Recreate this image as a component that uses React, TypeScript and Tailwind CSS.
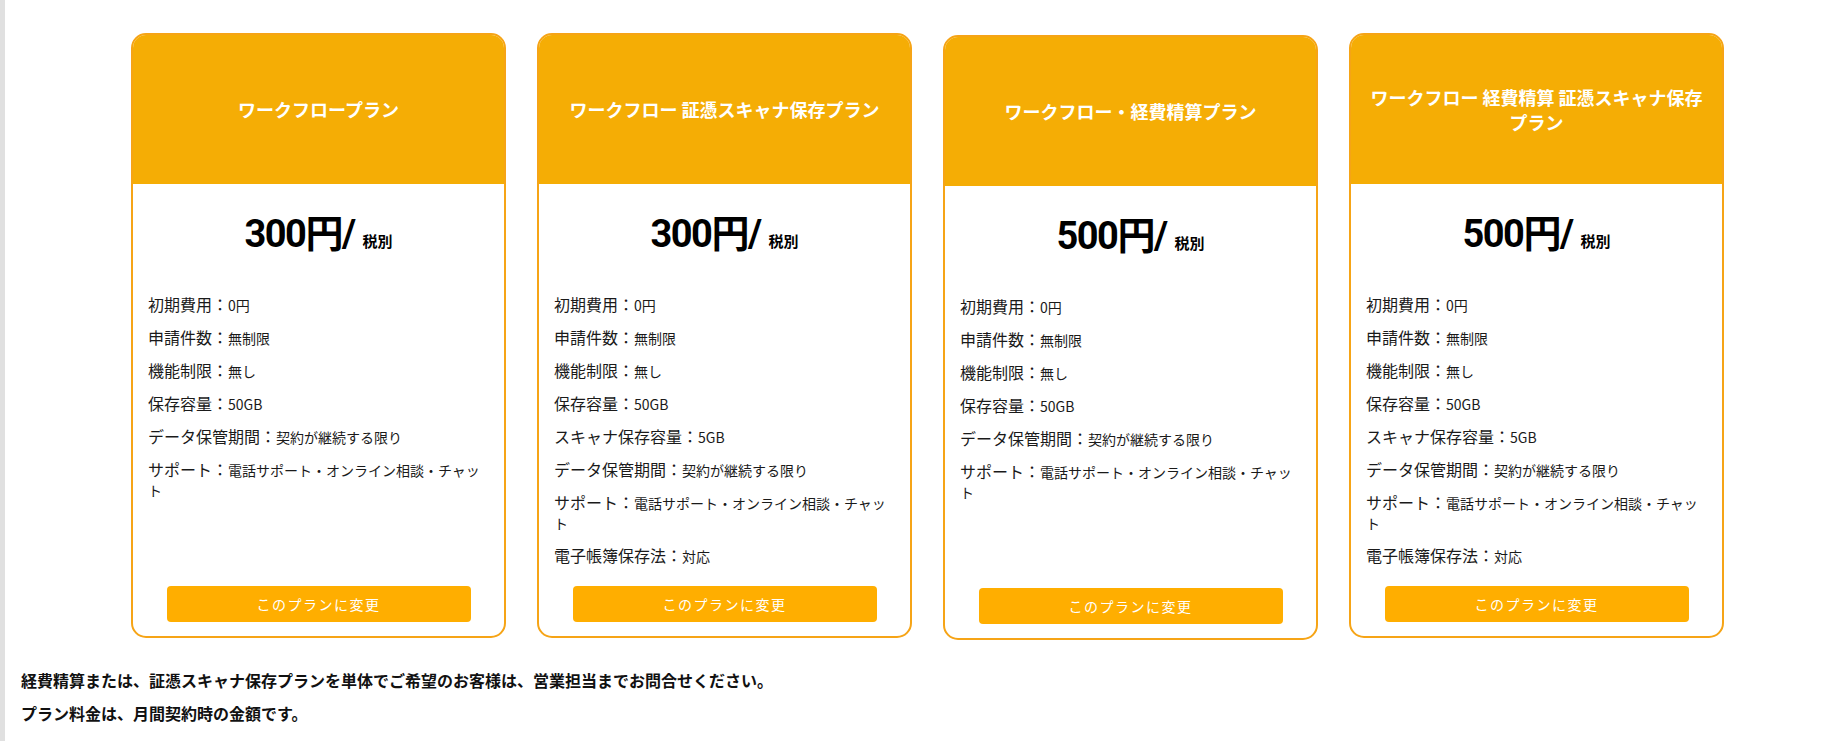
const baseRows: [string, string][] = [
  ['初期費用：', '0円'],
  ['申請件数：', '無制限'],
  ['機能制限：', '無し'],
  ['保存容量：', '50GB'],
];

const tailRows: [string, string][] = [
  ['データ保管期間：', '契約が継続する限り'],
  ['サポート：', '電話サポート・オンライン相談・チャット'],
];

const scanRows = {
  capacity: ['スキャナ保存容量：', '5GB'] as [string, string],
  law: ['電子帳簿保存法：', '対応'] as [string, string],
};

type Plan = {
  title: string;
  price: string;
  scan: boolean;
  shifted?: boolean;
};

const plans: Plan[] = [
  { title: 'ワークフロープラン', price: '300', scan: false },
  { title: 'ワークフロー 証憑スキャナ保存プラン', price: '300', scan: true },
  { title: 'ワークフロー・経費精算プラン', price: '500', scan: false, shifted: true },
  { title: 'ワークフロー 経費精算 証憑スキャナ保存プラン', price: '500', scan: true },
];

function rowsFor(plan: Plan): [string, string][] {
  if (!plan.scan) return [...baseRows, ...tailRows];
  return [...baseRows, scanRows.capacity, ...tailRows, scanRows.law];
}

function PlanCard({ plan }: { plan: Plan }) {
  return (
    <div
      className={`flex h-[605px] w-[375px] shrink-0 flex-col overflow-hidden rounded-[15px] border-2 border-[#f6a416] bg-white ${
        plan.shifted ? 'mt-[2px]' : ''
      }`}
    >
      <div className="flex h-[149px] shrink-0 items-center justify-center bg-[#f5ad05] px-[14px] text-center text-[18px] font-bold leading-[25px] text-white">
        {plan.title}
      </div>

      <div className="mt-[31px] text-center leading-[46px] text-black">
        <span className="font-['Roboto','Noto_Sans_CJK_JP',sans-serif] text-[38px] font-bold leading-none tracking-[-1.5px]">
          {plan.price}円/
        </span>
        <span className="ml-[8px] text-[15px] font-bold leading-none">税別</span>
      </div>

      <ul className="mt-[31px] px-[15px] text-[#1a1a1a]">
        {rowsFor(plan).map(([label, value]) => (
          <li key={label} className="mb-[13px] text-[16px] leading-[20px]">
            {label}
            <span className="text-[14px] leading-[16px]">{value}</span>
          </li>
        ))}
      </ul>

      <button className="mx-auto mb-[14px] mt-auto h-[36px] w-[304px] shrink-0 rounded-[4px] bg-[#ffae00] text-[14px] tracking-[1.5px] text-white">
        このプランに変更
      </button>
    </div>
  );
}

export default function App() {
  return (
    <div className="h-[741px] border-l-[5px] border-[#e0e0e0] bg-white font-['Noto_Sans_CJK_JP',sans-serif]">
      <div className="flex items-start gap-[31px] pl-[126px] pt-[33px]">
        {plans.map((plan) => (
          <PlanCard key={plan.title} plan={plan} />
        ))}
      </div>

      <div className="mt-[30px] px-[16px] text-[16px] font-bold leading-[20px] text-[#111]">
        <p className="mb-[13px]">経費精算または、証憑スキャナ保存プランを単体でご希望のお客様は、営業担当までお問合せください。</p>
        <p>プラン料金は、月間契約時の金額です。</p>
      </div>
    </div>
  );
}
